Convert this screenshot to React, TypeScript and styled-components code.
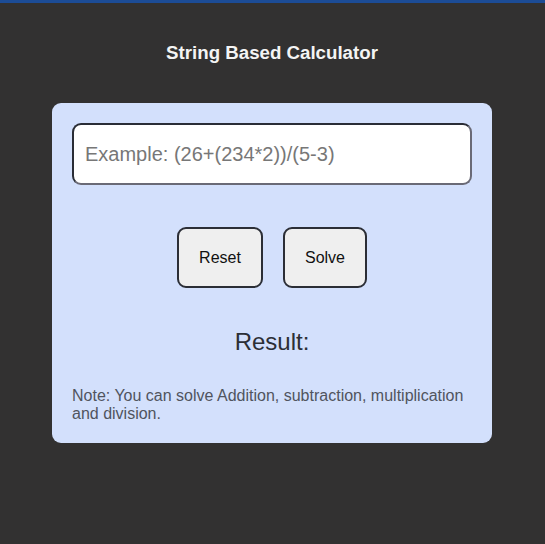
import React, { useState } from "react";
import styled, { createGlobalStyle } from "styled-components";

const Global = createGlobalStyle`
  html, body { margin: 0; padding: 0; background: #323131; }
  body { font-family: "Liberation Sans", Arial, sans-serif; }
`;

const Page = styled.div`
  min-height: 544px;
  box-sizing: border-box;
  border-top: 3px solid #1c4c96;
  padding-right: 1px;
  display: flex;
  flex-direction: column;
  align-items: center;
`;

const Title = styled.h1`
  margin: 39px 0 0;
  font-size: 18.7px;
  line-height: 22px;
  font-weight: bold;
  color: #f4f4f4;
`;

const Card = styled.div`
  margin-top: 39px;
  width: 440px;
  height: 340px;
  box-sizing: border-box;
  padding: 20px;
  background: #d3e0fc;
  border-radius: 9px;
  display: flex;
  flex-direction: column;
  align-items: center;
`;

const Input = styled.input`
  width: 400px;
  height: 64px;
  box-sizing: border-box;
  border: 2px solid #2a2d36;
  border-bottom-color: #6a6a76;
  border-right-color: #6a6a76;
  border-radius: 9px;
  background: #fff;
  padding: 0 11px;
  font-family: "Liberation Sans", Arial, sans-serif;
  font-size: 20px;
  color: #222;
  outline: none;
  &::placeholder { color: #777; }
`;

const Buttons = styled.div`
  margin-top: 42px;
  display: flex;
  gap: 20px;
`;

const Button = styled.button<{ $w: number }>`
  width: ${(p) => p.$w}px;
  height: 61px;
  box-sizing: border-box;
  border: 2px solid #2b2e36;
  border-radius: 9px;
  background: #efefef;
  font-family: "Liberation Sans", Arial, sans-serif;
  font-size: 16px;
  color: #111;
  cursor: pointer;
`;

const Result = styled.div`
  margin-top: 40px;
  font-size: 24px;
  line-height: 28px;
  color: #2c2f36;
`;

const Note = styled.p`
  align-self: stretch;
  margin: 31px 0 0;
  font-size: 16px;
  line-height: 18px;
  color: #50545e;
`;

export default function App() {
  const [v, setV] = useState("");
  return (
    <>
      <Global />
      <Page>
        <Title>String Based Calculator</Title>
        <Card>
          <Input
            value={v}
            onChange={(e) => setV(e.target.value)}
            placeholder="Example: (26+(234*2))/(5-3)"
          />
          <Buttons>
            <Button $w={86} onClick={() => setV("")}>Reset</Button>
            <Button $w={84}>Solve</Button>
          </Buttons>
          <Result>Result:</Result>
          <Note>Note: You can solve Addition, subtraction, multiplication and division.</Note>
        </Card>
      </Page>
    </>
  );
}
